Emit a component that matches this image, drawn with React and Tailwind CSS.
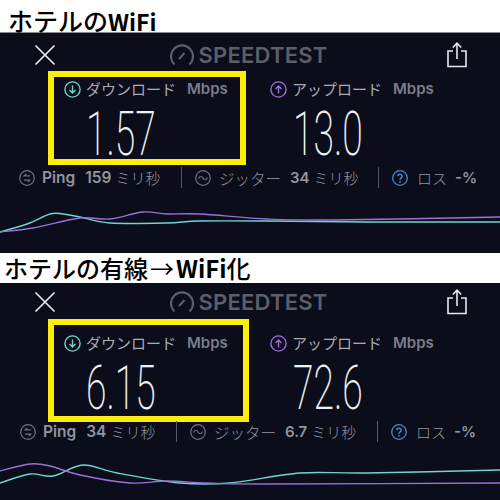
const cjk = "font-['Noto_Sans_CJK_JP',sans-serif]";

// catmull-rom through the sampled chart points
function smooth(points) {
    let d = `M${points[0][0]} ${points[0][1]}`;
    for (let i = 0; i < points.length - 1; i++) {
        const p0 = points[i - 1] || points[i];
        const p1 = points[i];
        const p2 = points[i + 1];
        const p3 = points[i + 2] || p2;
        const c1x = p1[0] + (p2[0] - p0[0]) / 6;
        const c1y = p1[1] + (p2[1] - p0[1]) / 6;
        const c2x = p2[0] - (p3[0] - p1[0]) / 6;
        const c2y = p2[1] - (p3[1] - p1[1]) / 6;
        d += ` C${c1x} ${c1y} ${c2x} ${c2y} ${p2[0]} ${p2[1]}`;
    }
    return d;
}

function Gauge() {
    return (
        <svg width="24" height="24" viewBox="0 0 24 24" fill="none" stroke="#5c5e69" strokeWidth="2.2" className="shrink-0">
            <path d="M4.5 21.5A11 11 0 1 1 19.5 21.5" />
            <path d="M9 16l5.5-6" strokeWidth="2" />
        </svg>
    );
}

function CloseIcon() {
    return (
        <svg width="22" height="22" viewBox="0 0 22 22" stroke="#e8e9ee" strokeWidth="1.7" className="shrink-0">
            <path d="M1.5 1.5l19 19M20.5 1.5l-19 19" />
        </svg>
    );
}

function ShareIcon() {
    return (
        <svg width="20" height="26" viewBox="0 0 20 26" fill="none" stroke="#e8e9ee" strokeWidth="1.6" className="shrink-0">
            <path d="M6 9H1v15.5h18V9h-5" />
            <path d="M10 17V1.5M5.8 5.5L10 1.2l4.2 4.3" />
        </svg>
    );
}

function ArrowCircle({ up, color }) {
    return (
        <svg width="17" height="17" viewBox="0 0 17 17" fill="none" stroke={color} strokeWidth="1.4" className="shrink-0">
            <circle cx="8.5" cy="8.5" r="7.6" />
            {up
                ? <path d="M8.5 12.5V5M5.5 8l3-3 3 3" />
                : <path d="M8.5 4.5V12M5.5 9l3 3 3-3" />}
        </svg>
    );
}

function PingIcon() {
    return (
        <svg width="16" height="16" viewBox="0 0 16 16" fill="none" stroke="#6f717d" strokeWidth="1.2" className="shrink-0">
            <circle cx="8" cy="8" r="7.3" />
            <path d="M11 5.8H5.2l2-2M5 10.2h5.8l-2 2" />
        </svg>
    );
}

function JitterIcon() {
    return (
        <svg width="16" height="16" viewBox="0 0 16 16" fill="none" stroke="#6f717d" strokeWidth="1.2" className="shrink-0">
            <circle cx="8" cy="8" r="7.3" />
            <path d="M3.5 8.6C5 5.6 6.6 5.6 8 8s3 2.4 4.5-.6" />
        </svg>
    );
}

function HelpIcon() {
    return (
        <svg width="16" height="16" viewBox="0 0 16 16" fill="none" stroke="#3f8ed8" strokeWidth="1.3" className="shrink-0">
            <circle cx="8" cy="8" r="7.3" />
            <path d="M5.8 6.3C5.9 3.6 10.2 3.6 10.2 6.2 10.2 7.9 8 7.9 8 9.8" strokeWidth="1.5" />
            <path d="M8 11v1.5" strokeWidth="1.6" />
        </svg>
    );
}

function SpeedValue({ value }) {
    return (
        <div className="h-[46px] font-['Roboto',sans-serif] font-extralight text-[61px] leading-[46px] text-[#eef0f4] origin-left scale-x-[0.61] whitespace-nowrap">
            {value}
        </div>
    );
}

function Label({ children }) {
    return (
        <div className="flex items-center gap-[5px] whitespace-nowrap text-[15px] leading-5">
            {children}
            <span className="ml-[6px] font-['Inter',sans-serif] font-semibold text-[#7b7d8e]">Mbps</span>
        </div>
    );
}

function Panel({ height, header, boxOuter, boxInner, download, upload, uploadOffset, statsClass, firstStat, secondStat, ping, jitter, chart }) {
    return (
        <div className={`${height} bg-[#0b0d1a] flex flex-col overflow-hidden`}>
            <div className={`flex items-center justify-between pl-[34px] pr-[33px] ${header}`}>
                <CloseIcon />
                <div className="flex items-center gap-[5px] mr-[6px]">
                    <Gauge />
                    <span className="font-['Inter',sans-serif] font-semibold text-[22px] leading-6 tracking-[0.2px] text-[#5c5e69]">SPEEDTEST</span>
                </div>
                <ShareIcon />
            </div>
            <div className="flex pl-[48px]">
                <div className={`${boxOuter} border-[6px] border-[#fcee09]`}>
                    <div className={`${boxInner} pl-[10px] text-[#a9abb7] ${cjk}`}>
                        <Label>
                            <ArrowCircle color="#6fd6cf" />
                            <span>ダウンロード</span>
                        </Label>
                        <div className="pl-[22px] mt-[12px]">
                            <SpeedValue value={download} />
                        </div>
                    </div>
                </div>
                <div className={`${uploadOffset} text-[#a9abb7] ${cjk}`}>
                    <Label>
                        <ArrowCircle up color="#9b6fdc" />
                        <span>アップロード</span>
                    </Label>
                    <div className="pl-[23px] mt-[12px]">
                        <SpeedValue value={upload} />
                    </div>
                </div>
            </div>
            <div className={`${statsClass} flex items-center text-[15px] leading-5 whitespace-nowrap text-[#92949f] ${cjk}`}>
                <div className={`${firstStat} flex items-center`}>
                    <PingIcon />
                    <span className="ml-[7px] font-['Inter',sans-serif] font-semibold text-[15.5px]">Ping</span>
                    <span className="ml-[10px] font-['Inter',sans-serif] font-semibold text-[15.5px]">{ping}</span>
                    <span className="ml-[4px] font-light">ミリ秒</span>
                </div>
                <div className="w-px h-[21px] bg-[#565864]"></div>
                <div className={`${secondStat} pl-[13px] flex items-center`}>
                    <JitterIcon />
                    <span className="ml-[8px] font-light text-[15.5px]">ジッター</span>
                    <span className="ml-[9px] font-['Inter',sans-serif] font-semibold">{jitter}</span>
                    <span className="ml-[4px] font-light">ミリ秒</span>
                </div>
                <div className="w-px h-[21px] bg-[#565864]"></div>
                <div className="pl-[13px] flex items-center">
                    <HelpIcon />
                    <span className="ml-[9px] font-light">ロス</span>
                    <span className="ml-[8px] font-['Inter',sans-serif] font-semibold">-%</span>
                </div>
            </div>
            {chart}
        </div>
    );
}

function Chart({ className, teal, purple }) {
    return (
        <svg width="500" height="40" viewBox="0 0 500 40" fill="none" strokeWidth="1.4" className={`block shrink-0 ${className}`}>
            <path d={smooth(teal)} stroke="#6fd6cf" />
            <path d={smooth(purple)} stroke="#9b6fdc" />
        </svg>
    );
}

function Title({ className, children }) {
    return (
        <div className={`bg-white text-black font-medium whitespace-nowrap ${cjk} ${className}`}>
            {children}
        </div>
    );
}

const teal1 = [[0, 27], [27, 19], [50, 9], [63, 9], [80, 12], [110, 18], [167, 18], [200, 16], [267, 16], [367, 17], [500, 17]];
const purple1 = [[0, 27], [33, 23], [80, 13], [110, 14], [143, 7], [167, 9], [200, 9], [267, 14], [333, 15], [500, 12]];
const teal2 = [[0, 30], [30, 21], [53, 23], [83, 12], [117, 20], [180, 30], [230, 30], [300, 20], [367, 20], [500, 17]];
const purple2 = [[0, 18], [30, 11], [50, 13], [80, 22], [130, 30], [167, 28], [207, 30], [267, 31], [500, 30]];

export default function App() {
    return (
        <div className="w-[500px] h-[500px] overflow-hidden bg-white">
            <Title className="h-[33px] pl-[8px] text-[25px] leading-[40px] border-b border-[#8a8a90]">
                ホテルの<span className="font-bold text-[23px]">WiFi</span>
            </Title>
            <Panel
                height="h-[220px]"
                header="pt-[6px] h-[38px]"
                boxOuter="w-[198px] h-[94px]"
                boxInner="pt-[2px]"
                download="1.57"
                upload="13.0"
                uploadOffset="pl-[24px] pt-[8px]"
                statsClass="pl-[19px] mt-[2px]"
                firstStat="w-[162px]"
                secondStat="w-[196px]"
                ping="159"
                jitter="34"
                chart={<Chart className="mt-[17px]" teal={teal1} purple={purple1} />}
            />
            <Title className="h-[30px] pl-[4px] text-[24px] leading-[30px]">
                ホテルの有線<span className="mx-[2px] font-normal">→</span><span className="font-bold">WiFi</span>化
            </Title>
            <Panel
                height="h-[217px]"
                header="pt-[2px] h-[36px]"
                boxOuter="w-[201px] h-[103px]"
                boxInner="pt-[8px]"
                download="6.15"
                upload="72.6"
                uploadOffset="pl-[21px] pt-[14px]"
                statsClass="pl-[20px] mt-[-1px]"
                firstStat="w-[156px]"
                secondStat="w-[200px]"
                ping="34"
                jitter="6.7"
                chart={<Chart className="mt-[11px]" teal={teal2} purple={purple2} />}
            />
        </div>
    );
}
